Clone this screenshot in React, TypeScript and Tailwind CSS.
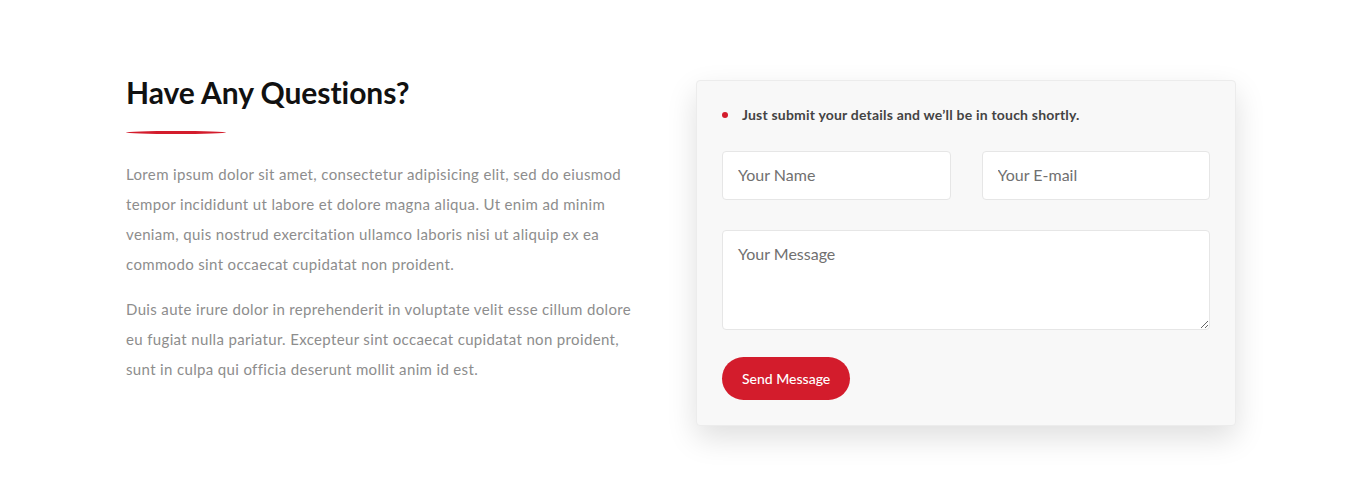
import React from 'react';

export default function App() {
  return (
    <div className="min-h-[500px] bg-white font-['Lato',sans-serif]">
      <div className="ml-[126px] flex w-[1110px] items-start justify-between pt-[73px]">
        {/* Intro */}
        <div className="w-[508px]">
          <h2 className="text-[30px] font-bold leading-[38px] tracking-[-0.05px] text-[#111]">Have Any Questions?</h2>
          <div className="mt-[20px] h-[3px] w-[100px] rounded-[50%] bg-[#d31c2c]" />
          <p className="mt-[25px] text-[15px] leading-[30px] tracking-[0.35px] text-[#8d8d8d]">
            Lorem ipsum dolor sit amet, consectetur adipisicing elit, sed do eiusmod tempor incididunt ut labore et dolore magna aliqua. Ut enim ad minim veniam, quis nostrud exercitation ullamco laboris nisi ut aliquip ex ea commodo sint occaecat cupidatat non proident.
          </p>
          <p className="mt-[15px] text-[15px] leading-[30px] tracking-[0.35px] text-[#8d8d8d]">
            Duis aute irure dolor in reprehenderit in voluptate velit esse cillum dolore eu fugiat nulla pariatur. Excepteur sint occaecat cupidatat non proident, sunt in culpa qui officia deserunt mollit anim id est.
          </p>
        </div>

        {/* Form card */}
        <form className="mt-[7px] w-[540px] rounded-[4px] border border-[#ececec] bg-[#f8f8f8] px-[25px] pb-[25px] pt-[24px] shadow-[0_12px_30px_rgba(0,0,0,0.13)]">
          <div className="flex items-center gap-[14px]">
            <span className="h-[6px] w-[6px] rounded-full bg-[#d31c2c]" />
            <span className="text-[14px] font-bold leading-[20px] tracking-[0.2px] text-[#444]">Just submit your details and we’ll be in touch shortly.</span>
          </div>
          <div className="mt-[26px] grid grid-cols-2 gap-[31px]">
            <input
              placeholder="Your Name"
              className="h-[49px] rounded-[4px] border border-[#e6e6e6] bg-white px-[15px] pb-[3px] text-[16px] text-[#555] outline-none placeholder:text-[#707070]"
            />
            <input
              placeholder="Your E-mail"
              className="h-[49px] rounded-[4px] border border-[#e6e6e6] bg-white px-[15px] pb-[3px] text-[16px] text-[#555] outline-none placeholder:text-[#707070]"
            />
          </div>
          <textarea
            placeholder="Your Message"
            className="mt-[30px] block h-[100px] w-full rounded-[4px] border border-[#e6e6e6] bg-white px-[15px] py-[11px] text-[16px] text-[#555] outline-none placeholder:text-[#707070]"
          />
          <button
            type="button"
            className="mt-[27px] h-[43px] rounded-full bg-[#d31c2c] px-[20px] text-[14px] font-medium text-white"
          >
            Send Message
          </button>
        </form>
      </div>
    </div>
  );
}
